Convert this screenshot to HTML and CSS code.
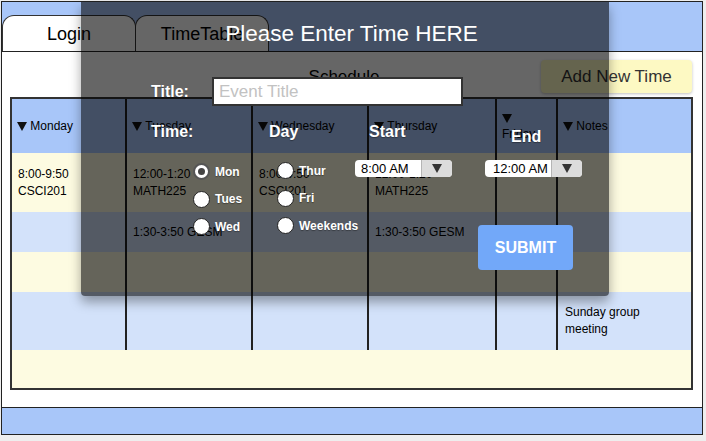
FILE: index.html
```html
<!DOCTYPE html>
<html>
<head>
<meta charset="utf-8">
<title>Schedule</title>
<link rel="stylesheet" href="styles.css">
</head>
<body>
<div class="frame">
  <header class="topbar">
    <div class="tab">Login</div>
    <div class="tab tab-second">TimeTable</div>
  </header>

  <main class="content">
    <div class="toolbar">
      <span></span>
      <h2 class="sched-title">Schedule</h2>
      <button class="add-btn">Add New Time</button>
    </div>

    <div class="sched">
      <div class="row hd">
        <div class="cell"><i class="tri"></i>&nbsp;Monday</div>
        <div class="cell"><i class="tri"></i>&nbsp;Tuesday</div>
        <div class="cell"><i class="tri"></i>&nbsp;Wednesday</div>
        <div class="cell"><i class="tri"></i>&nbsp;Thursday</div>
        <div class="cell"><span><i class="tri"></i><br>Friday</span></div>
        <div class="cell"><i class="tri"></i>&nbsp;Notes</div>
      </div>
      <div class="row y tall">
        <div class="cell">8:00-9:50<br>CSCI201</div>
        <div class="cell">12:00-1:20<br>MATH225</div>
        <div class="cell">8:00-9:50<br>CSCI201</div>
        <div class="cell">12:00-1:20<br>MATH225</div>
        <div class="cell"></div>
        <div class="cell notes"></div>
      </div>
      <div class="row b">
        <div class="cell"></div>
        <div class="cell">1:30-3:50 GESM</div>
        <div class="cell"></div>
        <div class="cell">1:30-3:50 GESM</div>
        <div class="cell"></div>
        <div class="cell notes"></div>
      </div>
      <div class="row y">
        <div class="cell"></div>
        <div class="cell"></div>
        <div class="cell"></div>
        <div class="cell"></div>
        <div class="cell"></div>
        <div class="cell notes"></div>
      </div>
      <div class="row b">
        <div class="cell"></div>
        <div class="cell"></div>
        <div class="cell"></div>
        <div class="cell"></div>
        <div class="cell"></div>
        <div class="cell notes">Sunday group meeting</div>
      </div>
      <div class="row y">
        <div class="cell span-all"></div>
      </div>
    </div>
  </main>

  <footer class="footbar"></footer>

  <div class="modal">
    <h1 class="modal-title">Please Enter Time HERE</h1>
    <div class="title-row">
      <label class="lbl title-lbl">Title:</label>
      <input class="title-input" type="text" placeholder="Event Title">
    </div>
    <div class="cols">
      <div class="col col-time">
        <div class="lbl">Time:</div>
        <div class="radios radios-a">
          <div class="radio"><span class="dot checked"></span><span class="rlabel">Mon</span></div>
          <div class="radio"><span class="dot"></span><span class="rlabel">Tues</span></div>
          <div class="radio"><span class="dot"></span><span class="rlabel">Wed</span></div>
        </div>
      </div>
      <div class="col col-day">
        <div class="lbl">Day</div>
        <div class="radios radios-b">
          <div class="radio"><span class="dot"></span><span class="rlabel">Thur</span></div>
          <div class="radio"><span class="dot"></span><span class="rlabel">Fri</span></div>
          <div class="radio"><span class="dot"></span><span class="rlabel">Weekends</span></div>
        </div>
      </div>
      <div class="col col-start">
        <div class="lbl lbl-start">Start</div>
        <div class="select select-start"><span class="val">8:00 AM</span><span class="arr"><i class="tri tri-sel"></i></span></div>
      </div>
      <div class="col col-end">
        <div class="lbl lbl-end">End</div>
        <div class="select select-end"><span class="val">12:00 AM</span><span class="arr"><i class="tri tri-sel"></i></span></div>
        <button class="submit">SUBMIT</button>
      </div>
    </div>
  </div>
</div>
</body>
</html>
```

FILE: styles.css
```css
* { box-sizing: border-box; }

html, body {
  margin: 0;
  background: #eeeeee;
}

body {
  padding: 1px 0 0 1px;
  font-family: "Liberation Sans", Arial, sans-serif;
  color: #000;
}

.frame {
  position: relative;
  width: 702px;
  height: 434px;
  border: 1px solid #222;
  background: #fff;
  display: flex;
  flex-direction: column;
}

/* top bar with tabs */
.topbar {
  height: 50px;
  flex: none;
  background: #a8c6f9;
  border-bottom: 1px solid #222;
  display: flex;
  align-items: flex-end;
}

.tab {
  width: 134px;
  height: 36px;
  background: #fff;
  border: 1px solid #333;
  border-bottom: none;
  border-radius: 12px 12px 0 0;
  font-size: 18px;
  display: flex;
  align-items: center;
  justify-content: center;
  padding-top: 1px;
}

.tab-second {
  margin-left: -1px;
}

/* content */
.content {
  flex: 1;
  padding: 8px 9px 0 8px;
}

.toolbar {
  display: grid;
  grid-template-columns: 1fr auto 1fr;
  align-items: center;
  height: 33px;
}

.sched-title {
  margin: 0 15px 0 0;
  font-size: 17px;
  font-weight: normal;
  line-height: 20px;
}

.add-btn {
  justify-self: end;
  margin-right: 1px;
  width: 151px;
  height: 33px;
  border: none;
  border-radius: 4px;
  background: #fdf9c3;
  box-shadow: 0 1px 3px rgba(0, 0, 0, 0.25);
  font-family: "Liberation Sans", Arial, sans-serif;
  font-size: 17px;
  color: #333;
  padding: 0;
}

/* schedule grid */
.sched {
  margin-top: 4px;
  width: 683px;
  border: 2px solid #333;
  display: grid;
  grid-template-columns: 113px 126px 116px 128px 61px 135px;
  grid-template-rows: 54px 59px 40px 40px 58px 38px;
  font-size: 12px;
  line-height: 17px;
}

.row { display: contents; }

.cell {
  display: flex;
  align-items: center;
  padding: 0 6px;
}

.cell + .cell {
  border-left: 2px solid #222;
  padding-left: 6px;
}

.cell.notes {
  padding-left: 7px;
  padding-right: 16px;
}

.row.hd .cell { background: #a8c6f9; padding-left: 5px; }
.row.y .cell { background: #fdfbe1; }
.row.b .cell { background: #d3e2fa; }

.cell.span-all {
  grid-column: 1 / -1;
}

.tri {
  display: inline-block;
  width: 0;
  height: 0;
  border-left: 5px solid transparent;
  border-right: 5px solid transparent;
  border-top: 9px solid #111;
  vertical-align: -2px;
}

/* footer */
.footbar {
  height: 27px;
  flex: none;
  background: #a8c6f9;
  border-top: 1px solid #222;
}

/* modal overlay */
.modal {
  position: absolute;
  left: 79px;
  top: 0;
  width: 528px;
  height: 294px;
  background: rgba(0, 0, 0, 0.6);
  border-radius: 0 0 4px 4px;
  box-shadow: 0 6px 12px rgba(0, 0, 0, 0.35);
  padding-top: 19px;
  color: #fff;
}

.modal-title {
  margin: 0;
  padding-left: 13px;
  text-align: center;
  font-size: 22.5px;
  line-height: 26px;
  font-weight: normal;
}

.title-row {
  margin: 30px 0 0 70px;
  display: flex;
  align-items: center;
  height: 29px;
}

.lbl {
  font-size: 16px;
  font-weight: bold;
  line-height: 20px;
  text-shadow: 0 1px 1px rgba(0, 0, 0, 0.35);
}

.title-lbl {
  width: 61px;
}

.title-input {
  width: 251px;
  height: 29px;
  border: 2px solid #333;
  background: #fff;
  padding: 0 5px;
  font-family: "Liberation Sans", Arial, sans-serif;
  font-size: 17px;
  color: #000;
  outline: none;
}

.title-input::placeholder {
  color: #c2c2c2;
}

.cols {
  margin: 16px 0 0 70px;
  display: flex;
  align-items: flex-start;
}

.col { display: flex; flex-direction: column; align-items: flex-start; }
.col-time { width: 118px; }
.col-day { width: 86px; }
.col-start { width: 130px; }
.col-end { flex: 1; }

.radios {
  display: flex;
  flex-direction: column;
  gap: 10.5px;
  margin-top: 21px;
}

.radios-a { margin-left: 42px; }
.radios-b { margin-left: 8px; margin-top: 20px; }

.radio {
  display: flex;
  align-items: center;
  height: 17px;
}

.dot {
  width: 17px;
  height: 17px;
  border-radius: 50%;
  background: #fff;
  border: 1px solid #222;
  display: flex;
  align-items: center;
  justify-content: center;
}

.dot.checked {
  border: 2px solid #555;
}

.dot.checked::after {
  content: "";
  width: 7px;
  height: 7px;
  border-radius: 50%;
  background: #444;
}

.rlabel {
  margin-left: 5px;
  font-size: 12px;
  font-weight: bold;
  text-shadow: 0 1px 1px rgba(0, 0, 0, 0.35);
}

.lbl-start { margin-left: 14px; }
.lbl-end { margin-left: 26px; margin-top: 5px; }

.select {
  margin-top: 18px;
  display: flex;
  height: 17px;
  background: #fff;
  border-radius: 4px;
  overflow: hidden;
  color: #000;
  font-size: 13px;
  line-height: 17px;
}

.select-start { width: 97px; }
.select-end { width: 97px; margin-top: 13px; }

.val { flex: 1; padding-left: 6px; white-space: nowrap; }
.select-end .val { padding-left: 8px; }

.arr {
  width: 31px;
  background: #dcdcdc;
  border-left: 1px solid #b5b5b5;
  display: flex;
  align-items: center;
  justify-content: center;
}

.tri-sel {
  border-left-width: 5px;
  border-right-width: 5px;
  border-top: 9px solid #333;
  vertical-align: middle;
}

.submit {
  margin: 48px 0 0 -7px;
  width: 95px;
  height: 45px;
  border: none;
  border-radius: 4px;
  background: #72a8f9;
  color: #fff;
  font-family: "Liberation Sans", Arial, sans-serif;
  font-size: 16px;
  font-weight: bold;
  padding: 0;
}
```
